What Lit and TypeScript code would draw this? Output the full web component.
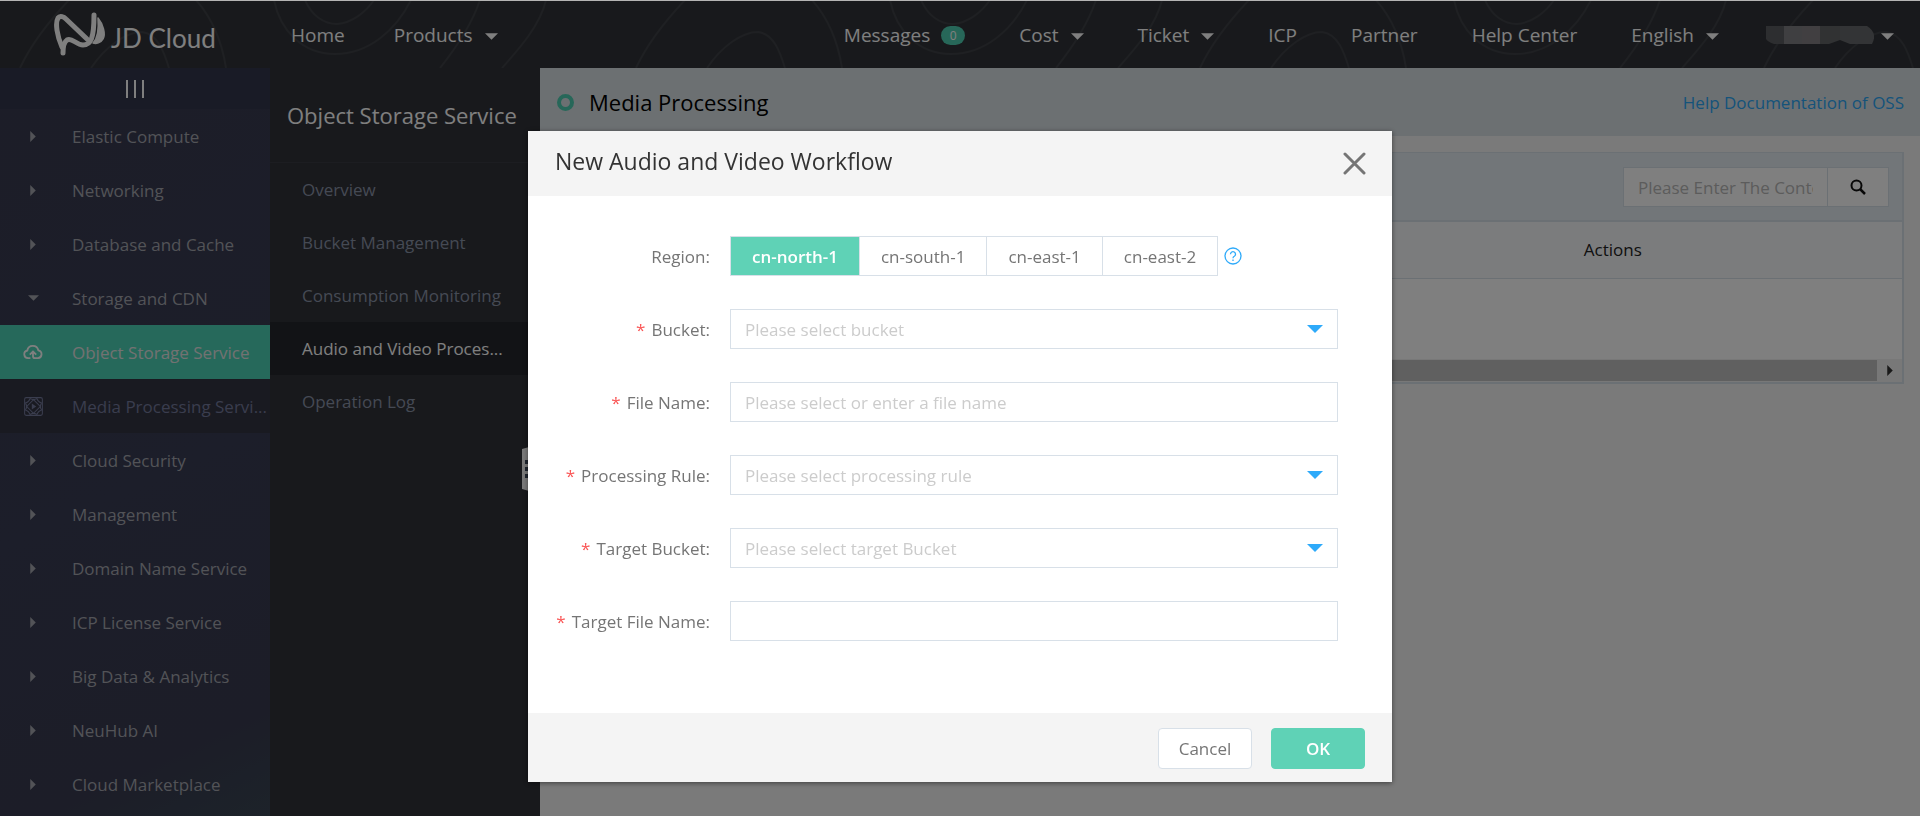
import { LitElement, html, css, svg } from "lit";
import { customElement, state } from "lit/decorators.js";
import { classMap } from "lit/directives/class-map.js";

const caret = html`<svg class="caret" viewBox="0 0 12 6" width="13" height="7" aria-hidden="true"><path d="M0 0h12L6 6z" fill="currentColor"/></svg>`;
const rightTri = html`<svg viewBox="0 0 5 10" width="6" height="11" aria-hidden="true"><path d="M0 0l5 5-5 5z" fill="currentColor"/></svg>`;
const downTri = html`<svg viewBox="0 0 10 5" width="11" height="6" aria-hidden="true"><path d="M0 0h10L5 5z" fill="currentColor"/></svg>`;
const cloudIcon = html`<svg viewBox="0 0 20 16" width="20" height="16" fill="none" stroke="currentColor" stroke-width="1.800" aria-hidden="true"><path d="M7.400 14.200H5a3.900 3.900 0 0 1-.7-7.700 5.600 5.600 0 0 1 11-.2 4 4 0 0 1-.3 7.900H12a2 2 0 0 1-2-2V7.600M6.800 10.600L10 7.400l3.200 3.200"/></svg>`;
const mediaIcon = html`<svg viewBox="0 0 18 18" width="19" height="19" fill="none" stroke="currentColor" stroke-width="1" aria-hidden="true"><rect x=".6" y=".6" width="16.800" height="16.800" rx="1.500"/><path d="M9 2.600L15.400 9 9 15.400 2.600 9z"/><path d="M1 6C4 5 5 4 6 1M12 1c1 3 2 4 5 5M1 12c3 1 4 2 5 5M12 17c1-3 2-4 5-5M6 1.500Q9 3.500 12 1.500M6 16.500q3-2 6 0M1.500 6q2 3 0 6M16.500 6q-2 3 0 6"/><path d="M7.400 6.200L11.600 9l-4.200 2.800z" fill="currentColor" stroke="none"/></svg>`;

const contour = (x: number) => svg`<g transform="translate(${x} 0)">
  <path d="M636 68C648 42 668 18 685 0M707 68C722 46 742 32 758 32C774 34 780 52 785 68M812 0C828 18 838 42 842 68"/>
  <path d="M921 0C928 16 940 24 953 24C968 23 982 12 990 0M890 0C896 30 918 54 951 54C985 54 1012 30 1027 0"/>
  <path d="M1096 0C1088 24 1072 48 1056 68M1162 0C1156 26 1134 50 1118 68"/>
</g>`;

interface NavItem { label: string; menu?: boolean; badge?: number }
const leftNav: NavItem[] = [{ label: "Home" }, { label: "Products", menu: true }];
const rightNav: NavItem[] = [
  { label: "Messages", badge: 0 },
  { label: "Cost", menu: true },
  { label: "Ticket", menu: true },
  { label: "ICP" },
  { label: "Partner" },
  { label: "Help Center" },
  { label: "English", menu: true },
];

interface SideItem { label: string; kind?: "open" | "active" | "child" }
const services: SideItem[] = [
  { label: "Elastic Compute" },
  { label: "Networking" },
  { label: "Database and Cache" },
  { label: "Storage and CDN", kind: "open" },
  { label: "Object Storage Service", kind: "active" },
  { label: "Media Processing Servi...", kind: "child" },
  { label: "Cloud Security" },
  { label: "Management" },
  { label: "Domain Name Service" },
  { label: "ICP License Service" },
  { label: "Big Data & Analytics" },
  { label: "NeuHub AI" },
  { label: "Cloud Marketplace" },
];
const sections = ["Overview", "Bucket Management", "Consumption Monitoring", "Audio and Video Proces...", "Operation Log"];

const shared = css`
  * { box-sizing: border-box; }
  :host { font-family: "Open Sans", "Noto Sans", sans-serif; font-size: 17px; }
  a { color: inherit; text-decoration: none; }
  button, input, select { font: inherit; margin: 0; }
  button { cursor: pointer; }
  svg { display: block; flex: none; }
`;

@customElement("top-bar")
class TopBar extends LitElement {
  static styles = [shared, css`
    :host { display: block; }
    .bar { position: relative; display: flex; align-items: center; height: 68px; padding: 0 26px 0 54px; background: #313338; color: #fff; font-size: 19px; overflow: hidden; }
    .contours { position: absolute; inset: 0; fill: none; stroke: #3e4146; stroke-width: 2; }
    .logo { position: relative; display: flex; align-items: center; gap: 5px; width: 237px; font-family: Lato, sans-serif; font-size: 26px; color: #fff; }
    .word { padding-top: 8px; line-height: 30px; white-space: nowrap; }
    .nav { position: relative; display: flex; align-items: center; gap: 49px; padding-top: 2px; white-space: nowrap; line-height: 28px; }
    .end { margin-left: auto; gap: 54px; }
    .item { display: flex; align-items: center; }
    .caret { margin-left: 12px; margin-top: 3px; }
    .badge { margin-left: 11px; min-width: 24px; height: 19px; border-radius: 10px; background: #4fcfb2; color: #fff; font-size: 12px; line-height: 19px; text-align: center; }
    .account { display: flex; align-items: center; padding: 0; border: 0; background: none; color: inherit; margin-left: -7px; }
    .account .caret { margin-left: 7px; }
  `];

  private link(item: NavItem) {
    return html`<a class="item" href="#">${item.label}${item.badge !== undefined ? html`<span class="badge">${item.badge}</span>` : ""}${item.menu ? caret : ""}</a>`;
  }

  render() {
    return html`<header class="bar">
      <svg class="contours" width="1920" height="68" aria-hidden="true">${[-616, 0, 564, 1128].map(contour)}</svg>
      <a class="logo" href="#">
        <svg viewBox="0 0 52 44" width="52" height="44" fill="none" stroke="#fff" stroke-width="5" stroke-linecap="round" stroke-linejoin="round" aria-hidden="true">
          <path d="M9 41C9 35 10 30 13 28C18 25 22 33 29 33C37 33 40 26 40 3"/>
          <path d="M8 35C3 24 1 11 4 6C6 3 10 5 12 7L33 27" />
          <path d="M44 6C49 12 52 22 49 27C47 31 42 32 39 31C44 26 45 18 44 6Z" fill="#fff" stroke-width="1.500"/>
        </svg>
        <span class="word">JD Cloud</span>
      </a>
      <nav class="nav" aria-label="Main">${leftNav.map((i) => this.link(i))}</nav>
      <nav class="nav end" aria-label="Account">
        ${rightNav.map((i) => this.link(i))}
        <button class="account" type="button" aria-label="Account">
          <svg width="108" height="18" viewBox="0 0 108 18" aria-hidden="true">
            <path d="M0 0h18v18H8Q2 16 0 13z" fill="#5a5c60"/><path d="M18 0h18v18H18z" fill="#7e7f83"/><path d="M36 0h18v18H36z" fill="#827e82"/><path d="M54 0h20v14l-11 4H54z" fill="#626467"/><path d="M74 0h27q11 7 5 18H84l-10-4z" fill="#67696c"/>
          </svg>
          ${caret}
        </button>
      </nav>
    </header>`;
  }
}

@customElement("service-menu")
class ServiceMenu extends LitElement {
  static styles = [shared, css`
    :host { display: flex; flex: none; }
    .services { width: 270px; background: linear-gradient(155deg, #383b50 0%, #383c54 55%, #383b50 88%, #3a4654 100%); color: #a4a6ae; overflow: hidden; }
    .toggle { display: flex; justify-content: center; align-items: center; gap: 6px; width: 100%; height: 41px; border: 0; padding: 0; background: #33364c; }
    .toggle i { width: 2px; height: 18px; background: #fff; }
    .service { display: flex; align-items: center; height: 54px; white-space: nowrap; }
    .mark { flex: none; display: flex; justify-content: center; width: 66px; margin-right: 6px; }
    .active { background: #4dd2b6; color: #fff; }
    .active .name { color: #e4e4e4; }
    .child { background: #323442; color: #747a9c; }
    .sections { position: relative; width: 270px; background: #303238; color: #8b94a8; }
    .title { display: flex; align-items: center; height: 95px; margin: 0; padding: 0 17px; border-bottom: 1px solid #383b42; color: #fff; font-size: 22px; font-weight: 400; line-height: 30px; white-space: nowrap; }
    .section { display: flex; align-items: center; height: 53px; padding-left: 32px; white-space: nowrap; }
    .current { background: #24262c; color: #fff; }
    .handle { position: absolute; right: 0; top: 376px; width: 18px; height: 50px; padding: 0; border: 0; background: none; }
  `];

  private mark(kind?: string) {
    if (kind === "open") return downTri;
    if (kind === "active") return cloudIcon;
    if (kind === "child") return mediaIcon;
    return rightTri;
  }

  render() {
    return html`
      <nav class="services" aria-label="Services">
        <button class="toggle" type="button" aria-label="Collapse menu"><i></i><i></i><i></i></button>
        ${services.map((s) => html`<a href="#" class=${classMap({ service: true, active: s.kind === "active", child: s.kind === "child" })}>
          <span class="mark">${this.mark(s.kind)}</span><span class="name">${s.label}</span></a>`)}
      </nav>
      <nav class="sections" aria-label="Object Storage Service">
        <h2 class="title">Object Storage Service</h2>
        ${sections.map((s, i) => html`<a href="#" class=${classMap({ section: true, current: i === 3 })}>${s}</a>`)}
        <button class="handle" type="button" aria-label="Hide sections">
          <svg width="18" height="50" viewBox="0 0 18 50" aria-hidden="true"><path d="M0 5L18 0v50L0 45z" fill="#f5f5f5"/><path d="M3 16h4v4H3zM3 23h4v4H3zM3 30h4v4H3z" fill="#3d4a5c"/></svg>
        </button>
      </nav>`;
  }
}

@customElement("media-page")
class MediaPage extends LitElement {
  static styles = [shared, css`
    :host { display: block; flex: 1; min-width: 0; background: #f5f5f5; color: #222; }
    .head { display: flex; align-items: center; height: 68px; padding: 0 16px 0 17px; background: #d9e0e5; }
    .ring { width: 17px; height: 17px; border: 4px solid #4fcfb2; border-radius: 50%; margin-right: 15px; }
    .heading { margin: 0; font-size: 22px; font-weight: 400; line-height: 30px; color: #000; }
    .help { margin-left: auto; color: #2ba7f5; }
    .panel { margin: 16px 16px 0; border: 1px solid #d6e0e8; border-right-width: 2px; border-bottom-width: 2px; background: #fff; }
    .tools { display: flex; justify-content: flex-end; height: 69px; padding: 14px 13px; background: #e4edf3; border-bottom: 2px solid #d6e0e8; }
    .search { display: flex; width: 266px; height: 40px; border: 1px solid #d6e0e8; background: #fff; }
    .query { flex: 1; min-width: 0; padding: 0 14px; border: 0; background: none; color: #666; }
    .query::placeholder { color: #b8b8b8; opacity: 1; }
    .find { display: flex; align-items: center; justify-content: center; width: 61px; border: 0; border-left: 1px solid #d6e0e8; background: none; color: #111; }
    .rules { width: 100%; border-collapse: collapse; table-layout: fixed; }
    .wide { width: 57%; }
    .rules th { height: 56px; padding: 0; border-bottom: 1px solid #d6e0e8; background: #f7f9fb; font-weight: 400; text-align: center; }
    .rules td { height: 81px; padding: 0; }
    .scroll { display: flex; align-items: center; height: 23px; background: #f1f1f1; }
    .thumb { flex: 1; height: 21px; background: #c1c1c1; }
    .next { display: flex; justify-content: center; width: 25px; color: #333; }
  `];

  render() {
    return html`
      <div class="head"><span class="ring"></span><h1 class="heading">Media Processing</h1><a class="help" href="#">Help Documentation of OSS</a></div>
      <section class="panel">
        <div class="tools">
          <form class="search" @submit=${(e: Event) => e.preventDefault()}>
            <input class="query" type="text" aria-label="Search" placeholder="Please Enter The Content" />
            <button class="find" type="submit" aria-label="Search">
              <svg width="16" height="16" viewBox="0 0 16 16" fill="none" stroke="currentColor" stroke-width="2" aria-hidden="true"><circle cx="6.500" cy="6.500" r="5"/><path d="M10 10l5 5" stroke-width="2.500"/></svg>
            </button>
          </form>
        </div>
        <table class="rules">
          <colgroup><col class="wide" /><col /></colgroup>
          <thead><tr><th></th><th scope="col">Actions</th></tr></thead>
          <tbody><tr><td></td><td></td></tr></tbody>
        </table>
        <div class="scroll"><span class="thumb"></span><span class="next">${rightTri}</span></div>
      </section>`;
  }
}

interface Field { id: string; label: string; select?: boolean; placeholder: string }
const fields: Field[] = [
  { id: "bucket", label: "Bucket:", select: true, placeholder: "Please select bucket" },
  { id: "file", label: "File Name:", placeholder: "Please select or enter a file name" },
  { id: "rule", label: "Processing Rule:", select: true, placeholder: "Please select processing rule" },
  { id: "target", label: "Target Bucket:", select: true, placeholder: "Please select target Bucket" },
  { id: "targetfile", label: "Target File Name:", placeholder: "" },
];

@customElement("workflow-dialog")
class WorkflowDialog extends LitElement {
  @state() private region = "cn-north-1";

  static styles = [shared, css`
    :host { position: fixed; inset: 0; display: flex; justify-content: center; align-items: flex-start; padding-top: 131px; background: rgba(0, 0, 0, 0.5); }
    .dialog { width: 864px; max-width: 100%; background: #fff; color: #757575; box-shadow: 0 1px 5px rgba(0, 0, 0, 0.5); }
    .top { display: flex; justify-content: space-between; align-items: center; height: 65px; padding: 0 26px 6px 27px; background: #f4f4f4; }
    .name { margin: 0; color: #333; font-size: 23px; font-weight: 400; line-height: 30px; }
    .close { padding: 5px 0 0; border: 0; background: none; color: #757575; }
    .form { display: grid; gap: 33px; padding: 40px 54px 72px 27px; }
    .row { display: grid; grid-template-columns: 155px 1fr; column-gap: 20px; align-items: center; height: 40px; }
    .label { text-align: right; white-space: nowrap; }
    .must { color: #fa5555; margin-right: 6px; }
    .control { display: flex; align-items: center; position: relative; }
    .box { width: 100%; height: 40px; padding: 0 14px; border: 1px solid #d8e0e8; border-radius: 0; background: #fff; color: #ccc; appearance: none; outline: none; }
    .box::placeholder { color: #ccc; opacity: 1; }
    .drop { position: absolute; right: 15px; color: #2eaafa; pointer-events: none; }
    .regions { display: flex; border: 1px solid #d8e0e8; height: 40px; }
    .region { padding: 0 21px; border: 0; border-left: 1px solid #d8e0e8; background: #fff; color: #757575; }
    .region:first-child { border-left: 0; }
    .on { background: #5fd2b6; color: #fff; font-weight: 600; }
    .tip { margin-left: 6px; padding: 0; border: 0; background: none; color: #2eaafa; }
    .foot { display: flex; justify-content: flex-end; gap: 19px; padding: 15px 27px 13px; background: #f4f4f4; }
    .action { width: 94px; height: 41px; border: 1px solid #d8e0e8; border-radius: 4px; background: #fff; color: #757575; }
    .ok { background: #5fd2b6; border-color: #5fd2b6; color: #fff; font-weight: 600; }
  `];

  render() {
    return html`<div class="dialog" role="dialog" aria-labelledby="name">
      <div class="top">
        <h2 class="name" id="name">New Audio and Video Workflow</h2>
        <button class="close" type="button" aria-label="Close"><svg width="23" height="23" viewBox="0 0 23 23" stroke="currentColor" stroke-width="3" stroke-linecap="round" aria-hidden="true"><path d="M2 2l19 19M21 2L2 21"/></svg></button>
      </div>
      <form class="form" @submit=${(e: Event) => e.preventDefault()}>
        <div class="row">
          <span class="label" id="region">Region:</span>
          <div class="control">
            <div class="regions" role="group" aria-labelledby="region">
              ${["cn-north-1", "cn-south-1", "cn-east-1", "cn-east-2"].map((r) => html`<button type="button" class=${classMap({ region: true, on: r === this.region })} @click=${() => (this.region = r)}>${r}</button>`)}
            </div>
            <button class="tip" type="button" aria-label="Help"><svg width="18" height="18" viewBox="0 0 18 18" fill="none" stroke="currentColor" stroke-width="1.300" aria-hidden="true"><circle cx="9" cy="9" r="8"/><path d="M6.500 7.200a2.500 2.500 0 1 1 3.800 2.100Q9 10 9 11.200M9 12.600v1.500"/></svg></button>
          </div>
        </div>
        ${fields.map((f) => html`<div class="row">
          <label class="label" for=${f.id}><span class="must">*</span>${f.label}</label>
          <div class="control">${f.select
            ? html`<select class="box" id=${f.id}><option>${f.placeholder}</option></select>
                <svg class="drop" width="16" height="8" viewBox="0 0 16 8" aria-hidden="true"><path d="M0 0h16L8 8z" fill="currentColor"/></svg>`
            : html`<input class="box" id=${f.id} type="text" placeholder=${f.placeholder} />`}</div>
        </div>`)}
      </form>
      <div class="foot"><button class="action" type="button">Cancel</button><button class="action ok" type="button">OK</button></div>
    </div>`;
  }
}

@customElement("app-root")
class AppRoot extends LitElement {
  static styles = css`
    :host { display: flex; flex-direction: column; height: 100vh; overflow: hidden; }
    .body { display: flex; flex: 1; min-height: 0; }
    .edge { position: fixed; inset: 0 0 auto; height: 1px; background: #b4b4b4; }
  `;

  render() {
    return html`<top-bar></top-bar>
      <div class="body"><service-menu></service-menu><media-page></media-page></div>
      <workflow-dialog></workflow-dialog>
      <div class="edge"></div>`;
  }
}
